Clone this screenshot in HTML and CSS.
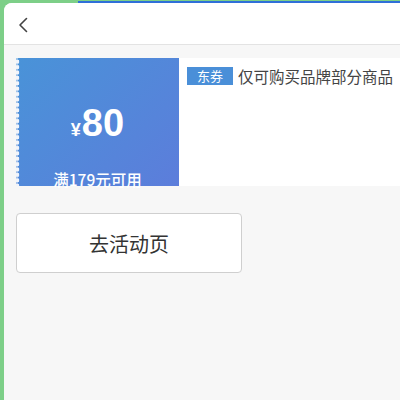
FILE: index.html
```html
<!DOCTYPE html>
<html lang="zh-CN">
<head>
    <meta charset="utf-8">
    <title>优惠券</title>
    <meta name="viewport" content="width=device-width, initial-scale=1">
    <link rel="stylesheet" href="styles.css">
</head>
<body>
    <div class="top-strip" aria-hidden="true"></div>
    <div class="page">
        <header class="nav">
            <button class="back" aria-label="返回">
                <svg width="11" height="16" viewBox="0 0 11 16" aria-hidden="true">
                    <path d="M8.5 1.5 L2 8 L8.5 14.5" fill="none" stroke="#444" stroke-width="1.6" stroke-linecap="round" stroke-linejoin="round"/>
                </svg>
            </button>
        </header>

        <main class="content">
            <section class="coupon">
                <div class="coupon-value">
                    <p class="price"><span class="yen">¥</span>80</p>
                    <p class="limit">满179元可用</p>
                </div>
                <div class="coupon-info">
                    <span class="tag">东券</span>
                    <span class="desc">仅可购买品牌部分商品</span>
                </div>
            </section>

            <button class="go-btn">去活动页</button>
        </main>
    </div>
</body>
</html>
```

FILE: styles.css
```css
body {
    margin: 0;
    background: #7dcf88;
    font-family: "Liberation Sans", "Noto Sans CJK SC", sans-serif;
    color: #333;
}
.top-strip {
    position: absolute;
    top: 0;
    left: 78px;
    right: 0;
    height: 3px;
    background: linear-gradient(#7dcf88 0 1px, #2f6fd8 1px);
}
.page {
    margin: 3px 0 0 4px;
    min-height: 397px;
    background: #f7f7f7;
    border-top-left-radius: 8px;
    overflow: hidden;
}
.nav {
    height: 41px;
    background: #fff;
    border-bottom: 1px solid #e3e3e3;
    display: flex;
    align-items: center;
    padding-left: 12px;
}
.back {
    border: none;
    background: none;
    padding: 0;
    margin-top: 3px;
    width: 14px;
    height: 20px;
    display: flex;
    align-items: center;
    justify-content: center;
    cursor: pointer;
}
.content {
    padding: 13px 0 0 12px;
}
.coupon {
    display: flex;
    height: 128px;
}
.coupon-value {
    width: 163px;
    position: relative;
    background: linear-gradient(135deg, #4993d8, #5c7ddb);
    color: #fff;
    display: flex;
    flex-direction: column;
    align-items: center;
}
.coupon-value::before {
    content: "";
    position: absolute;
    top: 0;
    bottom: 0;
    left: 0;
    width: 4px;
    background: radial-gradient(circle at 1px 50%, #f2f4fa 2px, transparent 2.6px) 0 1px / 4px 5.4px repeat-y;
}
.price {
    margin: 43px 0 0;
    font-size: 38px;
    font-weight: bold;
    line-height: 44px;
}
.yen {
    font-size: 18px;
    margin-right: 1px;
}
.limit {
    margin: 18px 0 0;
    font-size: 15.5px;
    font-weight: 500;
    line-height: 18px;
    font-family: "Noto Sans CJK SC", "Liberation Sans", sans-serif;
}
.coupon-info {
    flex: 1;
    background: #fff;
    padding: 8px 0 0 8px;
    display: flex;
    align-items: flex-start;
    gap: 5px;
    font-family: "Noto Sans CJK SC", sans-serif;
}
.tag {
    background: #4a8fd8;
    color: #fff;
    font-size: 13px;
    line-height: 18px;
    padding: 0 10px;
    margin-top: 1px;
}
.desc {
    font-size: 15.5px;
    line-height: 20px;
    color: #444;
}
.go-btn {
    margin-top: 27px;
    width: 226px;
    height: 60px;
    background: #fff;
    border: 1px solid #cfcfcf;
    border-radius: 4px;
    font-family: "Noto Sans CJK SC", sans-serif;
    font-size: 20px;
    color: #333;
    cursor: pointer;
}
```
